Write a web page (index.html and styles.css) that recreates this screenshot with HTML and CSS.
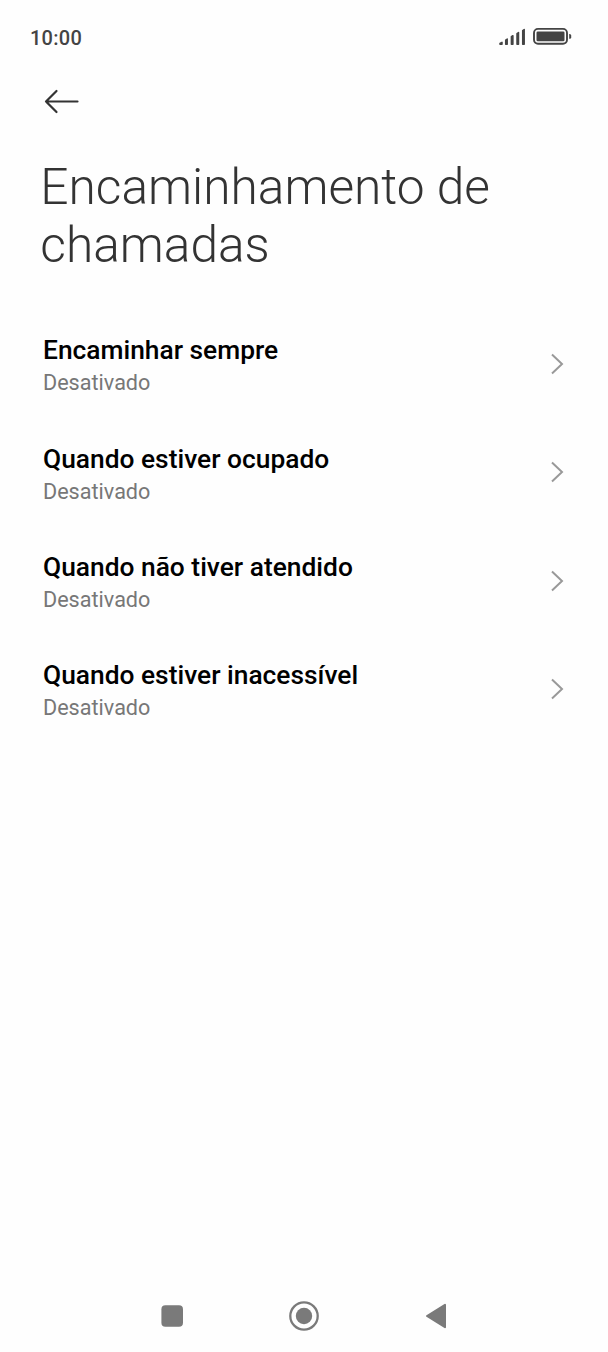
FILE: index.html
```html
<!DOCTYPE html>
<html lang="pt">
<head>
<meta charset="utf-8">
<title>Encaminhamento de chamadas</title>
<link rel="stylesheet" href="styles.css">
</head>
<body>
<div class="screen">
  <header class="status">
    <span class="time">10:00</span>
    <svg class="status-icons" width="74" height="20" viewBox="0 0 74 20">
      <path d="M2 16.500 4 15.300v2H2zM7.700 13 9.200 12v5.300H7.700zM13.400 9.700l1.500-1v8.600h-1.500zM19 6.500l1.500-1v11.800H19zM24.700 3.500l1.500-1v14.800h-1.500z" fill="#444" stroke="#444" stroke-width="1.500" stroke-linejoin="round"/>
      <rect x="36" y="1.900" width="33" height="14.800" rx="4" fill="none" stroke="#444" stroke-width="1.900"/>
      <rect x="38.500" y="4.500" width="28" height="9.800" rx="1.300" fill="#444"/>
      <path d="M71.200 6.900h.5q1.500 0 1.500 1.500v1.800q0 1.500-1.500 1.500h-.5z" fill="#444"/>
    </svg>
  </header>
  <nav class="toolbar">
    <svg width="36" height="26" viewBox="0 0 36 26" fill="none" stroke="#333" stroke-width="2.200" stroke-linecap="round" stroke-linejoin="round"><path d="M13.500 3 3 13.500 13.500 24M3 13.500h31.500"/></svg>
  </nav>
  <h1 class="title">Encaminhamento de<br>chamadas</h1>
  <main class="list">
    <div class="row"><div><div class="name">Encaminhar sempre</div><div class="state">Desativado</div></div><svg class="chevron" viewBox="0 0 14 22"><path d="m2 1.500 10 9.500L2 20.500"/></svg></div>
    <div class="row"><div><div class="name">Quando estiver ocupado</div><div class="state">Desativado</div></div><svg class="chevron" viewBox="0 0 14 22"><path d="m2 1.500 10 9.500L2 20.500"/></svg></div>
    <div class="row"><div><div class="name">Quando não tiver atendido</div><div class="state">Desativado</div></div><svg class="chevron" viewBox="0 0 14 22"><path d="m2 1.500 10 9.500L2 20.500"/></svg></div>
    <div class="row"><div><div class="name">Quando estiver inacessível</div><div class="state">Desativado</div></div><svg class="chevron" viewBox="0 0 14 22"><path d="m2 1.500 10 9.500L2 20.500"/></svg></div>
  </main>
  <footer class="navbar">
    <svg width="22" height="22" viewBox="0 0 22 22"><rect x=".4" y=".2" width="21.600" height="21.600" rx="4" fill="#7a7a7a"/></svg>
    <svg width="30" height="30" viewBox="0 0 30 30"><circle cx="15" cy="15" r="13.700" fill="none" stroke="#7a7a7a" stroke-width="2.300"/><circle cx="15" cy="15" r="8.200" fill="#7a7a7a"/></svg>
    <svg width="22" height="26" viewBox="0 0 22 26"><path d="M20 1.800v22.400L2 13z" fill="#7a7a7a" stroke="#7a7a7a" stroke-width="2" stroke-linejoin="round"/></svg>
  </footer>
</div>
</body>
</html>
```

FILE: styles.css
```css
* { box-sizing: border-box; }
body { margin: 0; background: #fefefe; font-family: Roboto, sans-serif; }
svg { display: block; }
.screen { height: 1352px; display: flex; flex-direction: column; }
.status { height: 75px; padding: 27px 35px 0 30px; display: flex; justify-content: space-between; align-items: flex-start; }
.status-icons { margin-right: 1px; }
.time { font-size: 20px; line-height: 22px; font-weight: 500; letter-spacing: .25px; color: #444; }
.toolbar { height: 83px; padding: 13px 0 0 43px; }
.title { margin: 0; height: 167px; padding-left: 40.300px; font-size: 49.650px; line-height: 58px; font-weight: 300; color: #333; white-space: nowrap; }
.list { flex: 1; }
.row { height: 108.300px; padding: 9.300px 44px 0 43px; display: flex; justify-content: space-between; }
.name { font-size: 26.350px; line-height: 32px; font-weight: 500; color: #000; }
.state { font-size: 21.600px; line-height: 34px; color: #777; }
.chevron { width: 14px; height: 22px; margin-top: 18.700px; fill: none; stroke: #999; stroke-width: 2; }
.navbar { height: 72px; padding: 0 161px; display: flex; justify-content: space-between; align-items: center; }
```
